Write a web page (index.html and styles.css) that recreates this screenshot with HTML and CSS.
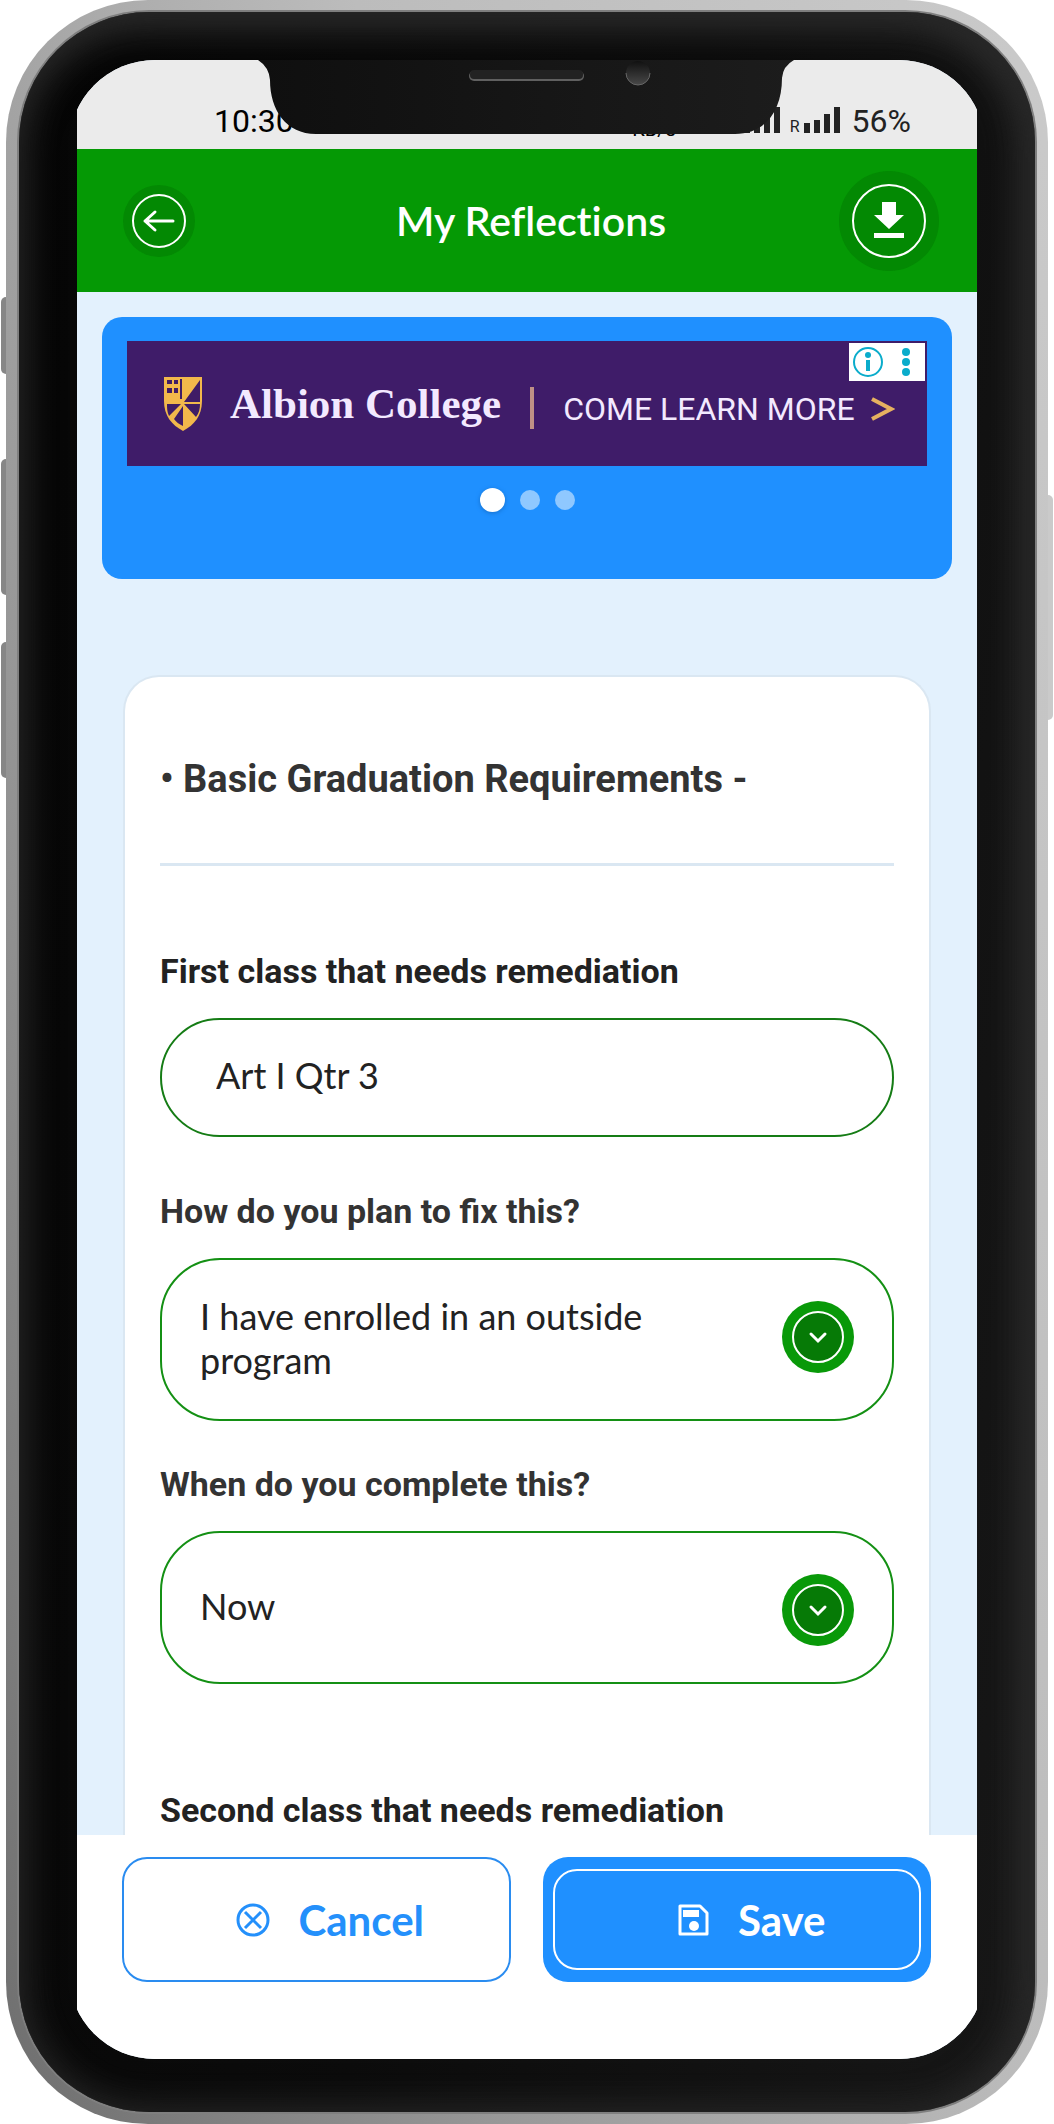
FILE: index.html
```html
<!DOCTYPE html>
<html lang="en">
<head>
<meta charset="utf-8">
<meta name="viewport" content="width=device-width, initial-scale=1">
<title>My Reflections</title>
<link rel="stylesheet" href="styles.css">
</head>
<body>
<div class="device">
  <span class="key key-mute"></span>
  <span class="key key-up"></span>
  <span class="key key-down"></span>
  <span class="key key-power"></span>
  <div class="bezel">
    <div class="cutout">
      <svg class="notch" viewBox="0 0 536 76" aria-hidden="true">
        <defs>
          <linearGradient id="notchFill"><stop offset="0" stop-color="#0f0f0f"/><stop offset="1" stop-color="#1c1c1c"/></linearGradient>
          <linearGradient id="lens" x2="0" y2="1"><stop offset="0" stop-color="#111"/><stop offset="1" stop-color="#484848"/></linearGradient>
        </defs>
        <path fill="url(#notchFill)" d="M0 0Q11 7 12 20C12 50 28 74 58 74H477C508 74 524 50 524 18Q525 6 536 0Z"/>
        <rect x="211" y="11" width="115" height="10" rx="5" fill="#606060"/>
        <rect x="212" y="10" width="113" height="9" rx="4" fill="#222"/>
        <circle cx="380" cy="13" r="12" fill="url(#lens)"/>
        <path d="M368 13a12 12 0 0 0 24 0" fill="none" stroke="#666" stroke-width="1"/>
      </svg>
      <div class="screen">
        <div class="status">
          <span class="clock">10:30</span>
          <span class="rate">KB/s</span>
          <svg class="bars" viewBox="0 0 36 26" aria-hidden="true"><path fill="#222" d="M0 16h6v10H0zM10 13h6v13h-6zM20 7h6v19h-6zM30 0h6v26h-6z"/></svg>
          <span class="roam">R</span>
          <svg class="bars" viewBox="0 0 36 26" aria-hidden="true"><path fill="#222" d="M0 16h6v10H0zM10 13h6v13h-6zM20 7h6v19h-6zM30 0h6v26h-6z"/></svg>
          <span class="battery">56%</span>
        </div>
        <header class="topbar">
          <button class="round round-back" aria-label="Back">
            <svg viewBox="0 0 72 72" aria-hidden="true"><g fill="none" stroke="#fff" stroke-width="2"><circle cx="36" cy="36" r="26"/><path stroke-width="3" stroke-linecap="round" stroke-linejoin="round" d="M50 36H22M32 27l-10 9 10 9"/></g></svg>
          </button>
          <h1 class="title">My Reflections</h1>
          <button class="round round-download" aria-label="Download">
            <svg viewBox="0 0 100 100" aria-hidden="true"><circle cx="50" cy="50" r="36" fill="none" stroke="#fff" stroke-width="2"/><path fill="#fff" d="M43 31h14v13h8L50 58 35 44h8zM35 62h30v5H35z"/></svg>
          </button>
        </header>
        <main class="content">
          <section class="carousel" aria-label="Sponsored">
            <a class="ad" href="#">
              <svg class="shield" viewBox="0 0 38 54" aria-hidden="true">
                <path fill="#f2b84b" d="M0 0h38v24c0 15-8 24-19 30C8 48 0 39 0 24z"/>
                <path fill="#3f1c66" d="M3 3h5v4H3zM10 3h4v4h-4zM3 11h5v5H3zM10 11h4v5h-4zM16 2h2v20h-2zM36 3v22H20zM3 27h14L5 39C3 35 3 31 3 27zM19 29v20c-4-2-7-4-9-7zM20 27h16c0 5-1 9-4 13z"/>
              </svg>
              <span class="ad-name">Albion College</span>
              <span class="ad-rule"></span>
              <span class="ad-text">COME LEARN MORE</span>
              <svg class="ad-arrow" viewBox="0 0 24 26" aria-hidden="true"><path d="M1 3l19 10L1 23" fill="none" stroke="#e6b160" stroke-width="4"/></svg>
            </a>
            <span class="ad-badge">
              <svg viewBox="0 0 76 38" aria-hidden="true"><g fill="#0aaccb"><circle cx="19" cy="19" r="14" fill="none" stroke="#0aaccb" stroke-width="2"/><circle cx="19" cy="12" r="3"/><path d="M17 17h4v11h-4z"/><circle cx="57" cy="9" r="4"/><circle cx="57" cy="19" r="4"/><circle cx="57" cy="29" r="4"/></g></svg>
            </span>
            <div class="dots"><span class="dot dot-on"></span><span class="dot"></span><span class="dot"></span></div>
          </section>
          <form class="card" id="reflection">
            <h2 class="heading">• Basic Graduation Requirements -</h2>
            <label class="label label-main" for="first">First class that needs remediation</label>
            <input class="field" id="first" type="text" value="Art I Qtr 3">
            <label class="label" for="plan">How do you plan to fix this?</label>
            <div class="pick pick-tall">
              <select id="plan"><option>I have enrolled in an outside program</option></select>
              <svg class="chevron" viewBox="0 0 72 72" aria-hidden="true"><circle cx="36" cy="36" r="36" fill="#099909"/><circle cx="36" cy="36" r="25" fill="#067a06" stroke="#fff" stroke-width="2"/><path d="M29 33l7 7 7-7" fill="none" stroke="#fff" stroke-width="3" stroke-linecap="round"/></svg>
            </div>
            <label class="label" for="when">When do you complete this?</label>
            <div class="pick">
              <select id="when"><option>Now</option></select>
              <svg class="chevron" viewBox="0 0 72 72" aria-hidden="true"><circle cx="36" cy="36" r="36" fill="#099909"/><circle cx="36" cy="36" r="25" fill="#067a06" stroke="#fff" stroke-width="2"/><path d="M29 33l7 7 7-7" fill="none" stroke="#fff" stroke-width="3" stroke-linecap="round"/></svg>
            </div>
            <h3 class="label label-next">Second class that needs remediation</h3>
          </form>
        </main>
        <footer class="actions">
          <button class="btn btn-cancel" type="button">
            <svg viewBox="0 0 34 34" aria-hidden="true"><g fill="none" stroke="#2490fb" stroke-width="3"><circle cx="17" cy="17" r="15"/><path d="M9 9l16 16M25 9L9 25"/></g></svg>
            Cancel
          </button>
          <button class="btn btn-save" type="submit" form="reflection">
            <span class="btn-ring">
              <svg viewBox="0 0 34 34" aria-hidden="true"><path d="M4 3h20l7 7v21H4z" fill="none" stroke="#fff" stroke-width="3" stroke-linejoin="round"/><path fill="#fff" d="M7 7h16v7H7z"/><circle cx="18" cy="23" r="5" fill="#fff"/></svg>
              Save
            </span>
          </button>
        </footer>
      </div>
    </div>
  </div>
</div>
</body>
</html>
```
FILE: styles.css
```css
* { box-sizing: border-box; }

body {
  margin: 0;
  background: #fff;
  color: #222;
  font-family: Lato, "Open Sans", sans-serif;
  font-variant-ligatures: none;
}

button { border: 0; padding: 0; font: inherit; cursor: pointer; }
h1, h2, h3 { margin: 0; }

/* Phone shell */
.device {
  position: relative;
  display: flex;
  min-height: 100vh;
  margin: 0 6px;
  padding: 12px 13px;
  border-radius: 142px;
  background: linear-gradient(72deg, #6e6e6e, #9a9a9a 30%, #bcbcbc 60%, #cacaca);
}

.key {
  position: absolute;
  left: -5px;
  width: 5px;
  border-radius: 5px 0 0 5px;
  background: #868686;
}
.key-mute { top: 297px; height: 77px; }
.key-up { top: 459px; height: 136px; }
.key-down { top: 642px; height: 136px; }
.key-power { top: 495px; left: auto; right: -5px; height: 225px; border-radius: 0 5px 5px 0; background: #cacaca; }

.bezel {
  flex: 1;
  min-width: 0;
  display: flex;
  padding: 48px 50px 53px;
  border-radius: 130px;
  background: linear-gradient(100deg, #060606, #0c0c0c 50%, #181818);
  box-shadow: 0 0 0 2px #7f7f7f, inset 0 0 40px #202020, inset -8px 10px 40px #3a3a3a;
}

.cutout {
  position: relative;
  flex: 1;
  min-width: 0;
  display: flex;
  padding: 0 8px;
  border-radius: 86px;
  overflow: hidden;
}

.notch {
  position: absolute;
  top: 0;
  left: 50%;
  width: 536px;
  margin-left: -269px;
}

.screen {
  flex: 1;
  min-width: 0;
  display: flex;
  flex-direction: column;
  background: #e3f1fd;
}

/* Status bar */
.status {
  display: flex;
  align-items: flex-end;
  height: 89px;
  padding: 0 66px 16px 137px;
  background: #ebebeb;
  color: #000;
  font-family: Roboto, sans-serif;
  font-size: 32px;
  line-height: 24px;
}
.clock { margin-right: auto; }
.rate { margin-right: 68px; font-size: 20px; line-height: 8px; }
.bars { width: 36px; height: 26px; }
.roam { margin: 0 4px 0 10px; color: #222; font-size: 16px; line-height: 12px; }
.battery { margin-left: 12px; color: #222; }

/* App header */
.topbar {
  display: grid;
  grid-template-columns: 1fr auto 1fr;
  align-items: center;
  height: 143px;
  padding: 0 38px 0 46px;
  background: #059905;
}
.title { color: #fff; font-size: 41px; font-weight: 600; line-height: 48px; }
.round { border-radius: 50%; background: #038903; }
.round svg { display: block; }
.round-back { width: 72px; height: 72px; }
.round-download { justify-self: end; width: 100px; height: 100px; }

/* Sponsored carousel */
.content {
  flex: 1;
  display: flex;
  flex-direction: column;
  gap: 96px;
  padding: 25px 25px 0;
}
.carousel {
  position: relative;
  height: 262px;
  padding: 24px 25px;
  border-radius: 20px;
  background: #1f90ff;
}
.ad {
  display: flex;
  align-items: center;
  height: 125px;
  padding: 0 32px 0 37px;
  background: #3f1c69;
  color: #f3e9ff;
  text-decoration: none;
  white-space: nowrap;
}
.shield { width: 38px; height: 54px; }
.ad-name { margin-left: 28px; font: bold 43px/48px "Liberation Serif", serif; }
.ad-rule { width: 4px; height: 42px; margin: 8px 29px 0; background: #bf9186; }
.ad-text { margin-top: 10px; font: 32px/40px Roboto, sans-serif; }
.ad-arrow { width: 24px; height: 26px; margin: 10px 0 0 auto; }
.ad-badge {
  position: absolute;
  top: 26px;
  right: 27px;
  width: 76px;
  height: 38px;
  background: #fff;
}
.ad-badge svg { display: block; }
.dots {
  display: flex;
  justify-content: center;
  align-items: center;
  gap: 15px;
  margin-top: 22px;
}
.dot { width: 20px; height: 20px; border-radius: 50%; background: #8fc8ff; }
.dot-on { width: 25px; height: 24px; background: #fff; box-shadow: 0 1px 4px #1670cc; }

/* Form card */
.card {
  flex: 1;
  display: flex;
  flex-direction: column;
  margin: 0 21px;
  padding: 0 35px;
  border: 2px solid #dae7f2;
  border-bottom: 0;
  border-radius: 36px 36px 0 0;
  background: #fff;
}
.heading {
  padding: 80px 0 62px;
  border-bottom: 3px solid #dae7f2;
  color: #333;
  font: 700 38px/44px Roboto, sans-serif;
}
.label {
  margin: 43px 0 27px;
  color: #333;
  font: 700 34px/40px Roboto, sans-serif;
}
.label-main { margin-top: 85px; color: #222; }
.label-next { margin: 106px 0 0; color: #222; }
.field,
.pick {
  border: 2px solid #149014;
  border-radius: 60px;
  color: #222;
  font-size: 36px;
}
.field {
  width: 100%;
  height: 119px;
  margin-bottom: 11px;
  padding: 0 54px 6px;
  border-color: #157c15;
  background: #fff;
  font-family: inherit;
}
.pick { display: grid; height: 153px; }
.pick-tall { height: 163px; }
.pick select {
  grid-area: 1 / 1;
  width: 100%;
  min-width: 0;
  padding: 0 200px 4px 38px;
  border: 0;
  border-radius: 60px;
  background: none;
  color: inherit;
  font: inherit;
  line-height: 44px;
  white-space: normal;
  appearance: none;
}
.chevron {
  grid-area: 1 / 1;
  place-self: start end;
  width: 72px;
  height: 72px;
  margin: 41px 38px 0 0;
  pointer-events: none;
}

/* Bottom actions */
.actions {
  display: grid;
  grid-template-columns: 1fr 1fr;
  gap: 32px;
  padding: 22px 46px 77px 45px;
  background: #fff;
}
.btn {
  display: flex;
  align-items: center;
  justify-content: center;
  height: 125px;
  border-radius: 25px;
  font-size: 42px;
  font-weight: 700;
  line-height: 48px;
}
.btn svg { width: 34px; height: 34px; margin-right: 28px; }
.btn-cancel { padding-left: 28px; border: 2px solid #2a8cf0; background: #fff; color: #2490fb; }
.btn-save { padding: 12px 10px; background: #1f90ff; color: #fff; }
.btn-ring {
  flex: 1;
  align-self: stretch;
  display: flex;
  align-items: center;
  justify-content: center;
  padding-left: 28px;
  border: 2px solid #fff;
  border-radius: 24px;
}
```
